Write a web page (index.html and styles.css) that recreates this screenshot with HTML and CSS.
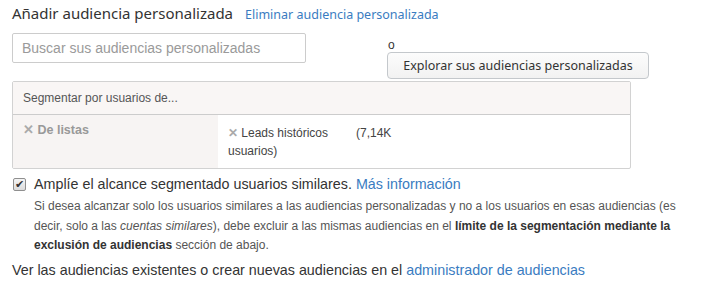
FILE: index.html
```html
<!DOCTYPE html>
<html>
<head>
	<meta charset="utf-8">
	<title>Audiencias personalizadas</title>
	<link rel="stylesheet" href="styles.css">
</head>
<body>
	<div class="audience-title">
		<h2>Añadir audiencia personalizada</h2>
		<a href="#" class="remove-link">Eliminar audiencia personalizada</a>
	</div>
	<div class="search-row">
		<input class="search-input" placeholder="Buscar sus audiencias personalizadas">
		<div class="browse">
			<span class="or">o</span>
			<button class="browse-btn">Explorar sus audiencias personalizadas</button>
		</div>
	</div>
	<div class="target-panel">
		<div class="panel-head">Segmentar por usuarios de...</div>
		<div class="panel-body">
			<div class="source"><span class="x">&#x2715;</span> De listas</div>
			<div class="items">
				<div class="item-line">
					<span class="item-name"><span class="x">&#x2715;</span> Leads históricos</span>
					<span class="item-count">(7,14K</span>
				</div>
				<div>usuarios)</div>
			</div>
		</div>
	</div>
	<div class="similar">
		<label class="similar-check"><input type="checkbox" checked> Amplíe el alcance segmentado usuarios similares. <a href="#">Más información</a></label>
		<p class="similar-help">Si desea alcanzar solo los usuarios similares a las audiencias personalizadas y no a los usuarios en esas audiencias (es decir, solo a las <em>cuentas similares</em>), debe excluir a las mismas audiencias en el <b>límite de la segmentación mediante la exclusión de audiencias</b> sección de abajo.</p>
	</div>
	<p class="manager">Ver las audiencias existentes o crear nuevas audiencias en el <a href="#">administrador de audiencias</a></p>
</body>
</html>
```
FILE: styles.css
```css
* {
	margin: 0px;
	padding: 0px;
	box-sizing: border-box;
}
body {
	font-family: 'Liberation Sans', Arial, sans-serif;
	color: #333;
	background: #fff;
	padding: 3px 12px 0 12px;
	width: 705px;
}
a {
	color: #3a7cc1;
	text-decoration: none;
}

.audience-title {
	display: flex;
	align-items: baseline;
	gap: 12px;
}
.audience-title h2 {
	font-family: 'Noto Sans', sans-serif;
	font-weight: normal;
	font-size: 15px;
	color: #333;
}
.remove-link {
	font-family: 'Noto Sans', sans-serif;
	font-size: 12.5px;
}

.search-row {
	display: flex;
	margin-top: 10px;
}
.search-input {
	width: 294px;
	height: 30px;
	border: 1px solid #ccc;
	border-radius: 2px;
	padding: 0 9px;
	font-family: 'Liberation Sans', Arial, sans-serif;
	font-size: 14px;
}
.search-input::placeholder {
	color: #9a9a9a;
}
.browse {
	display: flex;
	flex-direction: column;
	align-items: flex-start;
	margin-left: 81px;
	padding-top: 5px;
}
.or {
	font-size: 12px;
	line-height: 14px;
	padding-left: 1px;
}
.browse-btn {
	margin-top: 0;
	height: 27px;
	width: 262px;
	border: 1px solid #c4c8cc;
	border-radius: 4px;
	background: linear-gradient(#fcfcfc, #f2f2f2);
	font-family: 'Noto Sans', sans-serif;
	font-size: 12.5px;
	color: #333;
}

.target-panel {
	width: 619px;
	margin-top: 2px;
	border: 1px solid #d2d2d2;
	border-radius: 2px;
}
.panel-head {
	height: 33px;
	background: #f9f6f5;
	border-bottom: 1px solid #ccc;
	padding: 9px 10px;
	font-size: 12px;
	color: #555;
}
.panel-body {
	display: flex;
	height: 53px;
}
.source {
	width: 205px;
	background: #f7f4f3;
	padding: 7px 10px;
	font-size: 12.5px;
	font-weight: bold;
	color: #999;
}
.x {
	font-weight: bold;
	color: #aaa;
}
.items {
	padding: 9px 10px;
	font-size: 12px;
	line-height: 18px;
	color: #444;
}
.item-line {
	display: flex;
}
.item-name {
	width: 128px;
}

.similar {
	margin-top: 7px;
}
.similar-check {
	display: flex;
	align-items: center;
	gap: 8px;
	font-size: 14.3px;
	color: #333;
}
.similar-check input {
	appearance: none;
	width: 13px;
	height: 13px;
	margin-left: 1px;
	border: 1px solid #8f8f8f;
	border-radius: 2px;
	background: linear-gradient(#f4f4f4, #dcdcdc);
	display: flex;
	align-items: center;
	justify-content: center;
}
.similar-check input:checked::after {
	content: "\2714";
	font-size: 11px;
	line-height: 11px;
	color: #333;
}
.similar-check a {
	margin-left: -4px;
}
.similar-help {
	margin: 5px 0 0 22px;
	font-size: 12px;
	line-height: 19.7px;
	color: #555;
	width: 660px;
}
.similar-help b {
	color: #333;
}
.manager {
	margin-top: 6px;
	font-size: 14.3px;
	color: #333;
}
```
